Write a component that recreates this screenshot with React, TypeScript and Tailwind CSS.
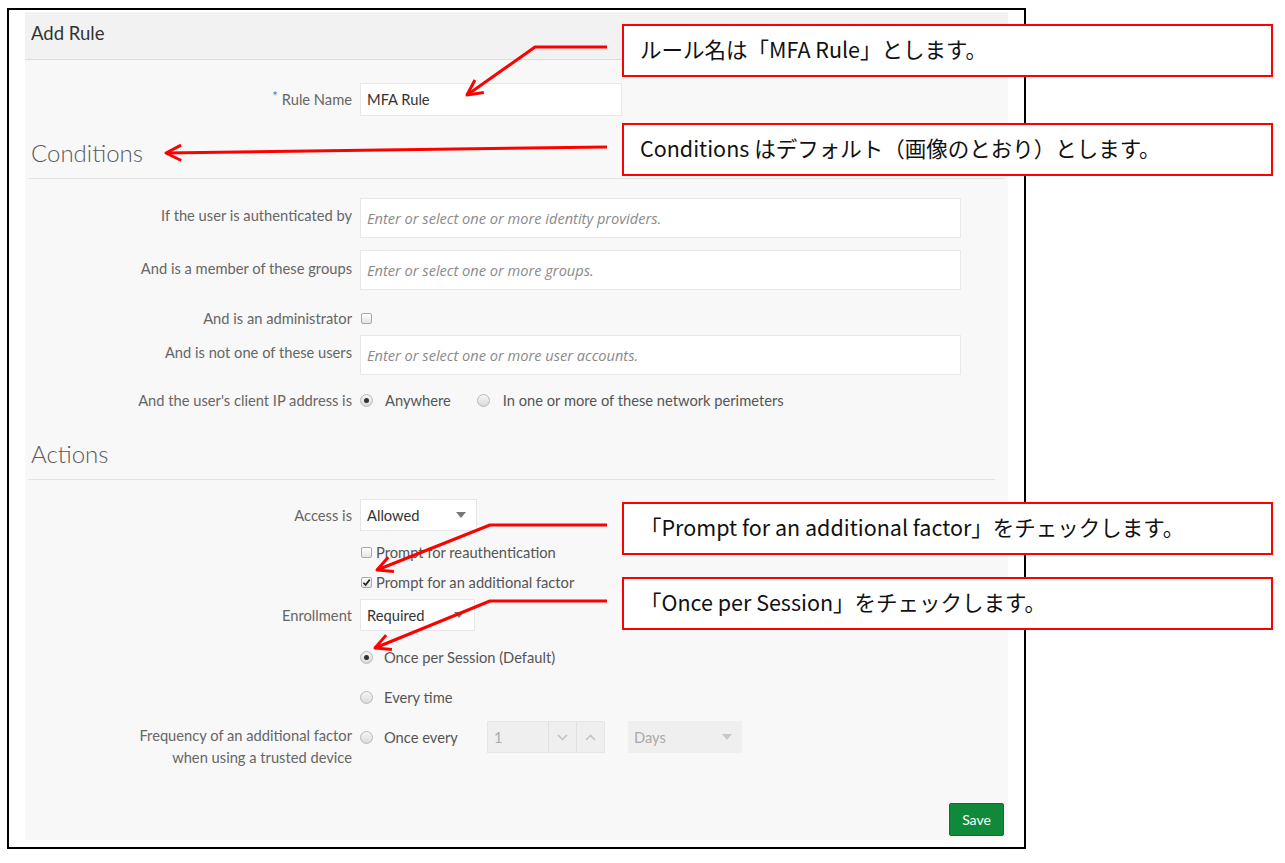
import React from "react";

type Kids = { children?: React.ReactNode };

function Label({ children, className = "" }: Kids & { className?: string }) {
  return (
    <div className={`w-[335px] shrink-0 pr-2 text-right text-[14.7px] leading-[20px] text-[#666] ${className}`}>
      {children}
    </div>
  );
}

function TextBox({ placeholder }: { placeholder: string }) {
  return (
    <div className="flex h-[40px] w-[601px] items-center border border-[#e8e8e8] bg-white px-[6px] pt-[1px] font-['Open_Sans',sans-serif] text-[14.6px] italic text-[#8a8a8a]">
      {placeholder}
    </div>
  );
}

function Check({ checked }: { checked?: boolean }) {
  return (
    <span className="inline-flex h-[11px] w-[11px] shrink-0 items-center justify-center rounded-[2px] border border-[#a8a8a8] bg-linear-to-b from-white to-[#e4e4e4]">
      {checked && (
        <svg viewBox="0 0 10 10" className="h-[9px] w-[9px]">
          <path d="M1.6 5.3 L4 7.7 L8.6 1.8" fill="none" stroke="#222" strokeWidth="1.9" />
        </svg>
      )}
    </span>
  );
}

function Radio({ checked }: { checked?: boolean }) {
  return (
    <span className="inline-flex h-[13px] w-[13px] shrink-0 items-center justify-center rounded-full border border-[#b8b8b8] bg-linear-to-b from-[#f6f6f6] to-[#dadada]">
      {checked && <span className="h-[5px] w-[5px] rounded-full bg-[#333]" />}
    </span>
  );
}

function Caret({ color = "#777" }: { color?: string }) {
  return (
    <svg width="10" height="6" viewBox="0 0 10 6">
      <path d="M0 0h10L5 6z" fill={color} />
    </svg>
  );
}

function Select({ value, className = "" }: { value: string; className?: string }) {
  return (
    <div className={`flex h-[32px] items-center justify-between border border-[#e6e6e6] bg-white pl-[6px] pr-[10px] text-[14.7px] text-[#333] ${className}`}>
      <span>{value}</span>
      <Caret />
    </div>
  );
}

function Chevron({ up }: { up?: boolean }) {
  return (
    <svg width="11" height="7" viewBox="0 0 11 7">
      <path d={up ? "M1 6l4.5-4.5L10 6" : "M1 1l4.5 4.5L10 1"} fill="none" stroke="#c4c4c4" strokeWidth="1.6" />
    </svg>
  );
}

function Heading({ children, wide }: Kids & { wide?: boolean }) {
  return (
    <div
      className={`ml-[3px] border-b border-[#e3e3e3] pb-[9px] pl-[3px] text-[24px] font-light leading-[32px] text-[#5a5a5a] ${
        wide ? "mr-[3px]" : "mr-[13px]"
      }`}
    >
      {children}
    </div>
  );
}

function Callout({ top, children }: Kids & { top: number }) {
  return (
    <div
      className="absolute left-[622px] flex h-[53px] w-[651px] items-center border-2 border-[#ff0000] bg-white pb-[3px] pl-[16px] font-['Noto_Sans_CJK_JP',sans-serif] text-[21.5px] text-[#111]"
      style={{ top }}
    >
      {children}
    </div>
  );
}

type Pt = [number, number];

function head(from: Pt, tip: Pt) {
  const dx = from[0] - tip[0];
  const dy = from[1] - tip[1];
  const len = Math.hypot(dx, dy);
  const ux = dx / len;
  const uy = dy / len;
  const a = (27 * Math.PI) / 180;
  const L = 17;
  const p1: Pt = [tip[0] + L * (ux * Math.cos(a) - uy * Math.sin(a)), tip[1] + L * (ux * Math.sin(a) + uy * Math.cos(a))];
  const p2: Pt = [tip[0] + L * (ux * Math.cos(a) + uy * Math.sin(a)), tip[1] + L * (-ux * Math.sin(a) + uy * Math.cos(a))];
  return `${p1[0]},${p1[1]} ${tip[0]},${tip[1]} ${p2[0]},${p2[1]}`;
}

const arrows: Pt[][] = [
  [[607, 47], [535, 47], [467, 95]],
  [[607, 147], [166, 153]],
  [[607, 525], [490, 525], [377, 570]],
  [[607, 601], [490, 601], [375, 648]],
];

export default function App() {
  return (
    <div className="relative h-[863px] w-[1285px] overflow-hidden bg-white font-['Lato',sans-serif]">
      {/* screenshot frame */}
      <div className="ml-[7px] mt-[8px] h-[841px] w-[1019px] border-2 border-black">
        <div className="ml-[16px] mt-[2px] flex h-[828px] w-[983px] flex-col bg-[#f8f8f8]">
          {/* header */}
          <div className="flex h-[48px] items-center border-b border-[#dcdcdc] bg-[#f2f2f2] pb-[3px] pl-[6px] text-[18.5px] text-[#333]">
            Add Rule
          </div>

          <div className="mt-[23px] flex items-center">
            <Label>
              <span className="relative -top-[4px] mr-[4px] text-[13px] text-[#3b87c6]">*</span>
              Rule Name
            </Label>
            <div className="flex h-[33px] w-[262px] items-center border border-[#e8e8e8] bg-white px-[6px] text-[14.7px] text-[#333]">
              MFA Rule
            </div>
          </div>

          <div className="mt-[21px]">
            <Heading wide>Conditions</Heading>
          </div>

          <div className="mt-[19px] flex items-start">
            <Label className="pt-[7px]">If the user is authenticated by</Label>
            <TextBox placeholder="Enter or select one or more identity providers." />
          </div>
          <div className="mt-[12px] flex items-start">
            <Label className="pt-[8px]">And is a member of these groups</Label>
            <TextBox placeholder="Enter or select one or more groups." />
          </div>
          <div className="mt-[18px] flex h-[20px] items-center">
            <Label>And is an administrator</Label>
            <span className="ml-[1px] flex">
              <Check />
            </span>
          </div>
          <div className="mt-[7px] flex items-start">
            <Label className="pt-[7px]">And is not one of these users</Label>
            <TextBox placeholder="Enter or select one or more user accounts." />
          </div>
          <div className="mt-[15px] flex h-[20px] items-center text-[14.7px] text-[#555]">
            <Label>And the user's client IP address is</Label>
            <Radio checked />
            <span className="ml-[12px]">Anywhere</span>
            <span className="ml-[26px] flex items-center">
              <Radio />
            </span>
            <span className="ml-[13px]">In one or more of these network perimeters</span>
          </div>

          <div className="mt-[28px]">
            <Heading>Actions</Heading>
          </div>

          <div className="mt-[19px] flex items-center">
            <Label>Access is</Label>
            <Select value="Allowed" className="w-[117px]" />
          </div>
          <div className="mt-[11px] flex h-[20px] items-center text-[14.7px] text-[#555]">
            <Label />
            <span className="ml-[1px] flex">
              <Check />
            </span>
            <span className="ml-[4px]">Prompt for reauthentication</span>
          </div>
          <div className="mt-[10px] flex h-[20px] items-center text-[14.7px] text-[#555]">
            <Label />
            <span className="ml-[1px] flex">
              <Check checked />
            </span>
            <span className="ml-[4px]">Prompt for an additional factor</span>
          </div>
          <div className="mt-[7px] flex items-center">
            <Label>Enrollment</Label>
            <Select value="Required" className="h-[31px] w-[115px]" />
          </div>
          <div className="mt-[16px] flex h-[20px] items-center text-[14.7px] text-[#555]">
            <Label />
            <Radio checked />
            <span className="ml-[11px]">Once per Session (Default)</span>
          </div>
          <div className="mt-[20px] flex h-[20px] items-center text-[14.7px] text-[#555]">
            <Label />
            <Radio />
            <span className="ml-[11px]">Every time</span>
          </div>
          <div className="mt-[14px] flex items-start text-[14.7px] text-[#555]">
            <Label className="pt-[3px] leading-[22px]">
              Frequency of an additional factor
              <br />
              when using a trusted device
            </Label>
            <div className="flex w-[127px] items-center pt-[5px]">
              <Radio />
              <span className="ml-[11px]">Once every</span>
            </div>
            <div className="flex h-[32px] w-[118px] border border-[#e6e6e6] bg-[#efefef]">
              <span className="flex flex-1 items-center pl-[6px] text-[#aaa]">1</span>
              <span className="flex w-[28px] items-center justify-center border-l border-[#e0e0e0]">
                <Chevron />
              </span>
              <span className="flex w-[28px] items-center justify-center border-l border-[#e0e0e0]">
                <Chevron up />
              </span>
            </div>
            <div className="ml-[23px] flex h-[32px] w-[114px] items-center justify-between bg-[#efefef] pl-[6px] pr-[10px] text-[#aaa]">
              <span>Days</span>
              <Caret color="#c8c8c8" />
            </div>
          </div>

          <div className="mt-auto flex justify-end pb-[4px] pr-[4px]">
            <button className="h-[33px] w-[55px] rounded-[2px] border border-[#0b6f2e] bg-[#108a3a] text-[14px] text-white">
              Save
            </button>
          </div>
        </div>
      </div>

      {/* annotation arrows */}
      <svg className="pointer-events-none absolute left-0 top-0" width="1285" height="863">
        {arrows.map((pts, i) => (
          <g key={i} fill="none" stroke="#ff0000" strokeWidth="3" strokeLinejoin="round">
            <polyline points={pts.map((p) => p.join(",")).join(" ")} />
            <polyline points={head(pts[pts.length - 2], pts[pts.length - 1])} />
          </g>
        ))}
      </svg>

      <Callout top={24}>ルール名は「MFA Rule」とします。</Callout>
      <Callout top={123}>Conditions はデフォルト（画像のとおり）とします。</Callout>
      <Callout top={502}>「Prompt for an additional factor」をチェックします。</Callout>
      <Callout top={577}>「Once per Session」をチェックします。</Callout>
    </div>
  );
}
